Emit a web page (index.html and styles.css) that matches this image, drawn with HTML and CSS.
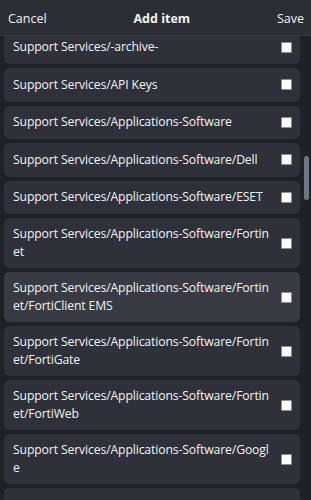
FILE: index.html
```html
<!DOCTYPE html>
<html>
<head>
<meta charset="utf-8">
<link rel="stylesheet" href="styles.css">
</head>
<body>
<div class="app">
  <header class="header">
    <span class="hbtn">Cancel</span>
    <span class="title">Add item</span>
    <span class="hbtn">Save</span>
  </header>
  <div class="viewport">
    <div class="list">
      <div class="card"><span class="label">Support Services/-archive-</span><span class="check"></span></div>
      <div class="card"><span class="label">Support Services/API Keys</span><span class="check"></span></div>
      <div class="card"><span class="label">Support Services/Applications-Software</span><span class="check"></span></div>
      <div class="card"><span class="label">Support Services/Applications-Software/Dell</span><span class="check"></span></div>
      <div class="card"><span class="label">Support Services/Applications-Software/ESET</span><span class="check"></span></div>
      <div class="card"><span class="label">Support Services/Applications-Software/Fortinet</span><span class="check"></span></div>
      <div class="card hover"><span class="label">Support Services/Applications-Software/Fortinet/FortiClient EMS</span><span class="check"></span></div>
      <div class="card"><span class="label">Support Services/Applications-Software/Fortinet/FortiGate</span><span class="check"></span></div>
      <div class="card"><span class="label">Support Services/Applications-Software/Fortinet/FortiWeb</span><span class="check"></span></div>
      <div class="card"><span class="label">Support Services/Applications-Software/Google</span><span class="check"></span></div>
      <div class="card"></div>
    </div>
    <div class="thumb"></div>
  </div>
</div>
</body>
</html>
```

FILE: styles.css
```css
* { box-sizing: border-box; }
html, body { margin: 0; padding: 0; }
body {
  background: #1e2128;
  font-family: "Open Sans", "Noto Sans", sans-serif;
  color: #f2f3f5;
  width: 311px;
  height: 500px;
  overflow: hidden;
}
.app { display: flex; flex-direction: column; height: 500px; }
.header {
  height: 36px;
  flex: none;
  display: flex;
  align-items: center;
  justify-content: space-between;
  padding: 1px 7px 0 8px;
  background: #2b2e35;
  border-bottom: 1px solid #3a3d45;
  font-size: 12.5px;
  position: relative;
  z-index: 2;
}
.title { font-weight: 700; }
.viewport {
  flex: 1;
  position: relative;
  overflow: hidden;
}
.list {
  display: flex;
  flex-direction: column;
  gap: 4px;
  padding: 0 11px 0 4px;
  margin-top: -5.5px;
}
.card {
  display: flex;
  align-items: center;
  background: #2e3139;
  border-radius: 5px;
  padding: 7px 8px 7px 9px;
  min-height: 33.5px;
  font-size: 12.2px;
  letter-spacing: -0.12px;
  line-height: 18px;
}
.card.hover { background: #383b44; }
.label {
  flex: 1;
  word-break: break-all;
  padding-right: 11px;
}
.check {
  flex: none;
  width: 11px;
  height: 11px;
  background: #ffffff;
  border: 1px solid #8a8d94;
  border-radius: 1px;
}
.thumb {
  position: absolute;
  right: 2px;
  top: 120px;
  width: 5px;
  height: 44px;
  border-radius: 3px;
  background: #6e7685;
}
```
